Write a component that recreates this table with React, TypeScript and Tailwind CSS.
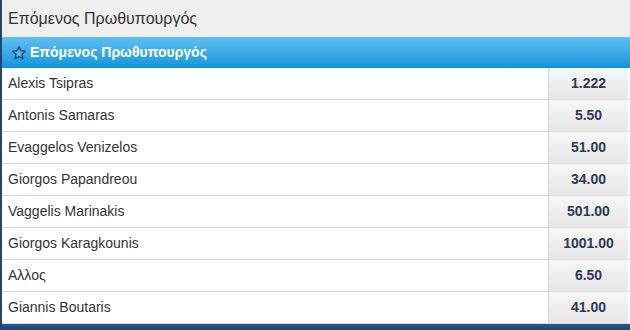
const rows: [string, string][] = [
  ["Alexis Tsipras", "1.222"],
  ["Antonis Samaras", "5.50"],
  ["Evaggelos Venizelos", "51.00"],
  ["Giorgos Papandreou", "34.00"],
  ["Vaggelis Marinakis", "501.00"],
  ["Giorgos Karagkounis", "1001.00"],
  ["Αλλος", "6.50"],
  ["Giannis Boutaris", "41.00"],
];

function Star() {
  return (
    <svg width="16" height="16" viewBox="0 0 24 24" className="shrink-0">
      <path
        d="M12 2.5l2.9 6.2 6.6.7-4.9 4.6 1.4 6.6L12 17.3l-6 3.3 1.4-6.6-4.9-4.6 6.6-.7z"
        fill="#5ab4e4"
        stroke="#1d4f86"
        strokeWidth="2.2"
        strokeLinejoin="round"
      />
    </svg>
  );
}

export default function App() {
  return (
    <div className="w-[630px] h-[330px] overflow-hidden bg-white border-l-2 border-[#24456e] font-['Liberation_Sans',Arial,sans-serif] flex flex-col">
      <div className="h-[37px] shrink-0 bg-[#efefef] flex items-center pl-[6px] text-[16px] text-[#333]">
        Επόμενος Πρωθυπουργός
      </div>
      <div className="h-[31px] shrink-0 bg-gradient-to-b from-[#5cc0f0] to-[#0a95db] flex items-center gap-[3px] pl-[9px] text-[14px] font-bold text-white">
        <Star />
        <span>Επόμενος Πρωθυπουργός</span>
      </div>
      <div className="flex flex-col">
        {rows.map(([name, odd]) => (
          <div key={name} className="h-[32px] flex border-b border-[#dcdcdc]">
            <div className="flex-1 flex items-center pl-[6px] text-[14px] text-[#333]">{name}</div>
            <div className="w-[80px] mr-[2px] border-l border-[#d8d8d8] bg-gradient-to-b from-[#f7f7f7] to-[#e6e6e6] flex items-center justify-center text-[14px] font-bold text-[#2c3a56]">
              {odd}
            </div>
          </div>
        ))}
      </div>
      <div className="flex-1 bg-gradient-to-b from-[#2a5a8c] to-[#1c4474]" />
    </div>
  );
}
